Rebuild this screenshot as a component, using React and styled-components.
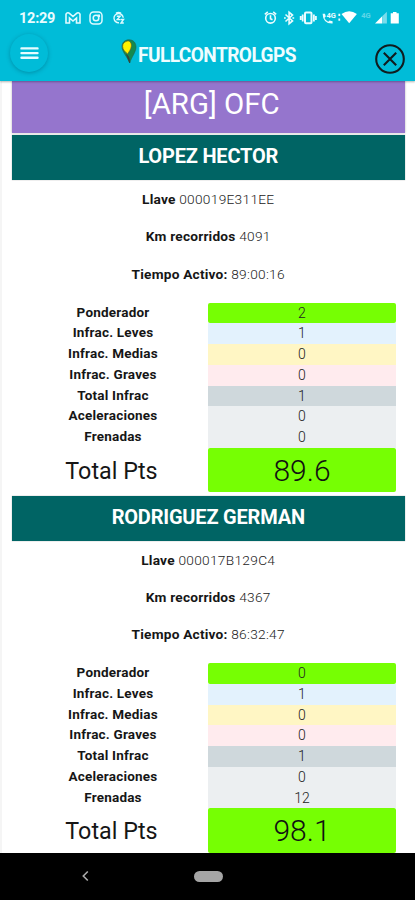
import React from 'react';
import styled, { createGlobalStyle } from 'styled-components';

const drivers = [
  {
    name: 'LOPEZ HECTOR',
    llave: '000019E311EE',
    km: '4091',
    tiempo: '89:00:16',
    values: ['2', '1', '0', '0', '1', '0', '0'],
    total: '89.6',
  },
  {
    name: 'RODRIGUEZ GERMAN',
    llave: '000017B129C4',
    km: '4367',
    tiempo: '86:32:47',
    values: ['0', '1', '0', '0', '1', '0', '12'],
    total: '98.1',
  },
];

const rows = [
  { label: 'Ponderador', color: '#76ff03' },
  { label: 'Infrac. Leves', color: '#e3f2fd' },
  { label: 'Infrac. Medias', color: '#fff6c4' },
  { label: 'Infrac. Graves', color: '#ffebee' },
  { label: 'Total Infrac', color: '#cfd8dc' },
  { label: 'Aceleraciones', color: '#eceff1' },
  { label: 'Frenadas', color: '#eceff1' },
];

const StatusIcons = () => (
  <>
    <NoticeIcons>
      <svg width="16" height="14" viewBox="0 0 16 14" fill="none" stroke="#dffaff" strokeWidth="1.6">
        <path d="M1 12V3.2Q2.5 .5 5 2.8L8 5.5L11 2.8Q13.5 .5 15 3.2V12H11.5V7L8 10L4.500 7V12Z" />
      </svg>
      <svg width="14" height="14" viewBox="0 0 14 14" fill="none" stroke="#dffaff" strokeWidth="1.5">
        <rect x="1" y="1" width="12" height="12" rx="3.5" />
        <circle cx="7" cy="7" r="2.8" />
        <path d="M8.500 4.300h1.800v1.800" />
      </svg>
      <SnoozeIcon width="13" height="14" viewBox="0 0 13 14" fill="none" stroke="#dffaff" strokeWidth="1.4">
        <path d="M4 2.200Q6.500 .8 9 2.200M7 11.700A4.600 4.600 0 1 1 11.200 6.800" />
        <path d="M4.800 5.200h3.400L5.200 8.600h3.300M8.800 8.500h2.700L9 12h2.800" />
      </SnoozeIcon>
    </NoticeIcons>
    <SystemIcons>
      <svg width="135" height="16" viewBox="264 9.500 135 16" fill="none" stroke="#eafcff" strokeWidth="1.6">
        <circle cx="270.5" cy="17.8" r="4.8" />
        <path d="M264.800 13.800l3-2.400M276.200 13.800l-3-2.400M270.500 14.800v3.400l2 1" />
        <path d="M285.500 14l7 6.400-3.400 2.800V11.800l3.400 2.800-7 6.400M284 17.500h1.800M292.400 17.500h1.800" />
        <rect x="305" y="12" width="6.500" height="10.800" rx="1" strokeWidth="2" />
        <path d="M302.700 14v7M300.700 15.500v4M313.900 14v7M315.900 15.500v4" strokeWidth="1.8" />
        <path d="M322.600 13.200h2.400l.8 2.900-1.400 1.300q1.300 2.600 3.800 3.900l1.400-1.400 3 .8v2.300q-9.600.4-10-9.800Z" fill="#eafcff" stroke="none" />
        <path d="M339.300 13.300v2.200M339.300 18v2.200" strokeWidth="1.8" />
        <path d="M341.500 13.600q7.700-5.800 15.400 0l-7.700 9.200Z" fill="#fff" stroke="none" />
        <path d="M375 23h7.200v-7.200Z" fill="#fff" stroke="none" />
        <path d="M382.200 23h4.700V11.200l-4.700 4.600Z" fill="#79dceb" stroke="none" />
        <path d="M393 12.800v-1.400h3.500v1.400h2.300V23h-8.100V12.800Z" fill="#fff" stroke="none" />
        <SmallMark x="326.500" y="17">4G</SmallMark>
        <SmallMark x="361.200" y="17" $faint>4G</SmallMark>
      </svg>
    </SystemIcons>
  </>
);

const PinIcon = () => (
  <svg width="16" height="26" viewBox="0 0 16 26">
    <path d="M8 .8C12.500 .8 15 4 15 8c0 5-4.500 10-6.300 16C6.500 18 1 13 1 7.500 1 3.500 4 .8 8 .8Z" fill="#138a4e" stroke="#24614a" strokeWidth=".6" />
    <path d="M5.700 2.300C8.500 1 11 4 10.300 7.500 10 10.500 8 12.500 6.600 15 4.500 13 1.600 11 1.600 7.300 1.600 4.500 3.500 2.800 5.700 2.300Z" fill="#fff200" stroke="#665f1c" strokeWidth=".7" />
    <path d="M5.500 15.500C8 17 8.500 20 8.700 24Z" fill="#384238" stroke="#384238" strokeWidth=".7" />
  </svg>
);

const Driver = ({ driver }) => (
  <>
    <DriverName>{driver.name}</DriverName>
    <Details>
      <Detail><b>Llave</b> {driver.llave}</Detail>
      <Detail><b>Km recorridos</b> {driver.km}</Detail>
      <Detail><b>Tiempo Activo:</b> {driver.tiempo}</Detail>
    </Details>
    <Scores>
      {rows.map((row, i) => (
        <ScoreRow key={row.label}>
          <Label>{row.label}</Label>
          <Value $color={row.color} $rounded={i === 0}>{driver.values[i]}</Value>
        </ScoreRow>
      ))}
      <TotalRow>
        <TotalLabel>Total Pts</TotalLabel>
        <TotalValue>{driver.total}</TotalValue>
      </TotalRow>
    </Scores>
  </>
);

const App = () => (
  <Screen>
    <GlobalStyle />
    <Header>
      <StatusBar>
        <Clock>12:29</Clock>
        <StatusIcons />
      </StatusBar>
      <Toolbar>
        <MenuButton aria-label="Menu">
          <svg width="20" height="14" viewBox="0 0 20 14" stroke="#e6fcff" strokeWidth="2.4" strokeLinecap="round">
            <path d="M2.500 2.400h16M2.500 7.100h16M2.500 11.800h16" />
          </svg>
        </MenuButton>
        <Brand>
          <PinIcon />
          <BrandName>FULLCONTROLGPS</BrandName>
        </Brand>
        <CloseButton aria-label="Cerrar">
          <svg width="30" height="30" viewBox="0 0 30 30" fill="none" stroke="#101c1e" strokeWidth="2.1">
            <circle cx="15" cy="15" r="13.800" />
            <path d="M8.800 8.800l12.400 12.400M21.200 8.800L8.800 21.200" />
          </svg>
        </CloseButton>
      </Toolbar>
    </Header>
    <Content>
      <Group>[ARG] OFC</Group>
      {drivers.map((driver) => (
        <Driver key={driver.name} driver={driver} />
      ))}
    </Content>
    <NavBar>
      <svg width="8" height="12" viewBox="0 0 8 12" fill="none" stroke="#aaa" strokeWidth="1.600">
        <path d="M6.800 1.500L2.300 6l4.500 4.500" />
      </svg>
      <HomePill />
    </NavBar>
  </Screen>
);

export default App;

const GlobalStyle = createGlobalStyle`
  body {
    margin: 0;
    font-family: Roboto, sans-serif;
  }

  * {
    box-sizing: border-box;
  }

  svg {
    display: block;
    flex: none;
  }
`;

const Screen = styled.div`
  display: flex;
  flex-direction: column;
  width: 415px;
  height: 900px;
  overflow: hidden;
  background: #fff;
`;

const Header = styled.header`
  flex: none;
  height: 80.5px;
  background: #00bcd8;
  box-shadow: 0 1px 2px rgba(0, 0, 0, 0.3);
  z-index: 1;
`;

const StatusBar = styled.div`
  display: flex;
  align-items: center;
  height: 34px;
  padding: 1px 16px 0 19px;
`;

const Clock = styled.span`
  width: 46px;
  padding-top: 1px;
  color: #e8fcff;
  font-size: 14.5px;
  font-weight: 700;
  letter-spacing: -0.25px;
`;

const NoticeIcons = styled.div`
  display: flex;
  align-items: center;
  gap: 8px;
`;

const SnoozeIcon = styled.svg`
  margin-left: 1px;
`;

const SystemIcons = styled.div`
  margin-left: auto;
`;

const SmallMark = styled.text`
  fill: #eafcff;
  stroke: none;
  font-size: 7.5px;
  font-weight: 700;
  opacity: ${(props) => (props.$faint ? 0.4 : 1)};
`;

const Toolbar = styled.div`
  display: grid;
  grid-template-columns: 38px 1fr 30px;
  align-items: start;
  padding: 0 10px;
`;

const MenuButton = styled.button`
  display: flex;
  align-items: center;
  justify-content: center;
  width: 38px;
  height: 38px;
  padding: 0;
  border: none;
  border-radius: 50%;
  background: #00bcd8;
  box-shadow: 0 1px 4px rgba(0, 60, 80, 0.35);
`;

const Brand = styled.div`
  display: flex;
  align-items: flex-start;
  gap: 1px;
  padding: 4.5px 0 0 73px;
`;

const BrandName = styled.span`
  margin-top: 4.5px;
  color: #eefdff;
  font-size: 20.5px;
  font-weight: 700;
  line-height: 24px;
  letter-spacing: -0.6px;
  transform: scaleX(0.93);
  transform-origin: left;
`;

const CloseButton = styled.button`
  margin-top: 10px;
  padding: 0;
  border: none;
  background: none;
`;

const Content = styled.main`
  flex: 1;
  min-height: 0;
  overflow: hidden;
  padding: 0 10px 0 9.5px;
  border-left: 2px solid #f5f5f5;
`;

const Group = styled.div`
  height: 52px;
  margin-bottom: 2.5px;
  padding-left: 7px;
  background: #9575cd;
  color: #fff;
  font-size: 29.4px;
  line-height: 47px;
  text-align: center;
  box-shadow: 0 0 2px rgba(0, 0, 0, 0.3);
`;

const DriverName = styled.h2`
  height: 45px;
  margin: 0;
  background: #006464;
  color: #fff;
  font-size: 20px;
  font-weight: 700;
  line-height: 43px;
  letter-spacing: -0.2px;
  text-align: center;
  box-shadow: 0 0 1px rgba(0, 0, 0, 0.4);
`;

const Details = styled.div`
  height: 122.5px;
  padding-top: 1px;
`;

const Detail = styled.p`
  margin: 0;
  color: #222;
  font-size: 13.7px;
  font-weight: 300;
  line-height: 37.4px;
  letter-spacing: 0.3px;
  text-align: center;

  b {
    color: #161616;
    font-weight: 700;
    letter-spacing: 0.2px;
  }
`;

const Scores = styled.div`
  height: 193.1px;
  padding: 0 9px 0 6.5px;
`;

const ScoreRow = styled.div`
  display: grid;
  grid-template-columns: 190px 1fr;
  height: 20.75px;
  line-height: 20px;
  text-align: center;
`;

const Label = styled.span`
  color: #161616;
  font-size: 13.5px;
  font-weight: 700;
  line-height: 19px;
  letter-spacing: 0.2px;
`;

const Value = styled.span`
  background: ${(props) => props.$color};
  border-radius: ${(props) => (props.$rounded ? '2px' : '0')};
  color: #222;
  font-size: 14px;
  font-weight: 300;
`;

const TotalRow = styled(ScoreRow)`
  height: 44.2px;
  grid-template-rows: 44.2px;
  line-height: 45px;
`;

const TotalLabel = styled.span`
  padding-right: 3px;
  color: #161616;
  font-size: 23.3px;
  line-height: 47px;
`;

const TotalValue = styled.span`
  background: #76ff03;
  border-radius: 2px;
  color: #111;
  font-size: 30px;
  font-weight: 300;
`;

const NavBar = styled.nav`
  display: flex;
  flex: none;
  align-items: center;
  gap: 105px;
  height: 47.5px;
  padding: 0 0 0 81px;
  background: #000;
`;

const HomePill = styled.div`
  width: 29px;
  height: 11px;
  border-radius: 6px;
  background: #a5a5a5;
`;
